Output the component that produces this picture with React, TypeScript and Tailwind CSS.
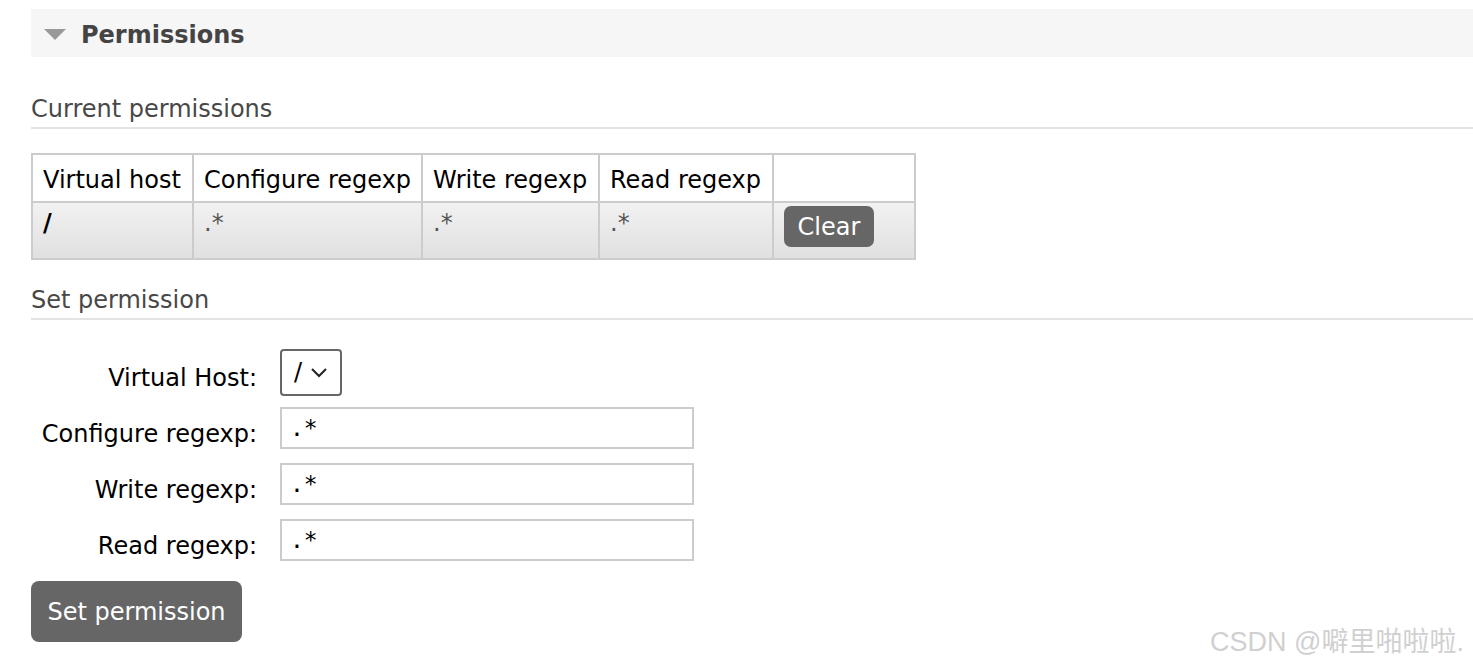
import React from "react";

const font = { fontFamily: '"DejaVu Sans", Verdana, sans-serif' };

function SectionTitle({ children }: { children: React.ReactNode }) {
  return (
    <div className="border-b-2 border-[#e4e4e4] pb-[4px] text-[24px] leading-[30px] text-[#484848]">
      <div className="translate-y-[1px]">{children}</div>
    </div>
  );
}

function FormRow({ label, children }: { label: string; children: React.ReactNode }) {
  return (
    <div className="flex h-[56px] items-center">
      <div className="mt-[11px] w-[249px] pr-[23px] text-right text-[24px] text-black">{label}</div>
      {children}
    </div>
  );
}

function RegexInput() {
  return (
    <input
      defaultValue=".*"
      className="h-[42px] w-[414px] border-2 border-[#cccccc] px-[8px] text-[23px] text-black outline-none"
      style={{ fontFamily: '"DejaVu Sans Mono", monospace' }}
    />
  );
}

export default function App() {
  const heads = ["Virtual host", "Configure regexp", "Write regexp", "Read regexp", ""];
  const widths = ["w-[161px]", "w-[229px]", "w-[177px]", "w-[174px]", "w-[142px]"];
  return (
    <div className="relative h-[668px] w-[1473px] overflow-hidden bg-white pl-[31px] pt-[9px]" style={font}>
      <div className="flex h-[48px] items-center bg-[#f6f6f6] pl-[13px]">
        <svg width="22" height="11" viewBox="0 0 22 11" className="mt-[2px]">
          <polygon points="0,0 22,0 11,11" fill="#999" />
        </svg>
        <span className="ml-[15px] mt-[3px] text-[24px] font-bold text-[#444]">Permissions</span>
      </div>

      <div className="mt-[36px]">
        <SectionTitle>Current permissions</SectionTitle>
      </div>

      <table className="mt-[24px] w-[884px] table-fixed border-collapse border-2 border-[#cccccc] text-[24px]">
        <thead>
          <tr className="h-[48px] bg-white">
            {heads.map((h, i) => (
              <th
                key={i}
                className={`${widths[i]} whitespace-nowrap border-2 border-[#cccccc] px-[10px] pt-[3px] text-left font-normal text-black`}
              >
                {h}
              </th>
            ))}
          </tr>
        </thead>
        <tbody>
          <tr className="h-[57px] bg-gradient-to-b from-[#f2f2f2] to-[#e0e0e0]">
            <td className="border-2 border-[#cccccc] px-[10px] align-top pt-[2px] font-bold text-black">/</td>
            <td className="border-2 border-[#cccccc] px-[10px] align-top pt-[2px] text-[#555]">.*</td>
            <td className="border-2 border-[#cccccc] px-[10px] align-top pt-[2px] text-[#555]">.*</td>
            <td className="border-2 border-[#cccccc] px-[10px] align-top pt-[2px] text-[#555]">.*</td>
            <td className="border-2 border-[#cccccc] px-[10px] align-top pt-[3px]">
              <button className="h-[41px] w-[90px] rounded-[7px] bg-[#666666] text-[24px] text-white">Clear</button>
            </td>
          </tr>
        </tbody>
      </table>

      <div className="mt-[24px]">
        <SectionTitle>Set permission</SectionTitle>
      </div>

      <div className="mt-[24px] flex flex-col">
        <FormRow label="Virtual Host:">
          <div className="flex h-[47px] w-[62px] items-center justify-between rounded-[4px] border-2 border-[#666] px-[12px] text-[24px] text-black">
            <span>/</span>
            <svg width="18" height="11" viewBox="0 0 18 11">
              <polyline points="2,2 9,9 16,2" fill="none" stroke="#222" strokeWidth="2" />
            </svg>
          </div>
        </FormRow>
        <FormRow label="Configure regexp:">
          <RegexInput />
        </FormRow>
        <FormRow label="Write regexp:">
          <RegexInput />
        </FormRow>
        <FormRow label="Read regexp:">
          <RegexInput />
        </FormRow>
      </div>

      <button className="mt-[13px] h-[61px] w-[211px] rounded-[8px] bg-[#666666] text-[24px] text-white">
        Set permission
      </button>

      <div
        className="absolute left-[1210px] top-[622px] text-[27px] text-[#d0d0d0]"
        style={{ fontFamily: '"Liberation Sans", "Noto Sans CJK SC", sans-serif' }}
      >
        CSDN @噼里啪啦啦.
      </div>
    </div>
  );
}
